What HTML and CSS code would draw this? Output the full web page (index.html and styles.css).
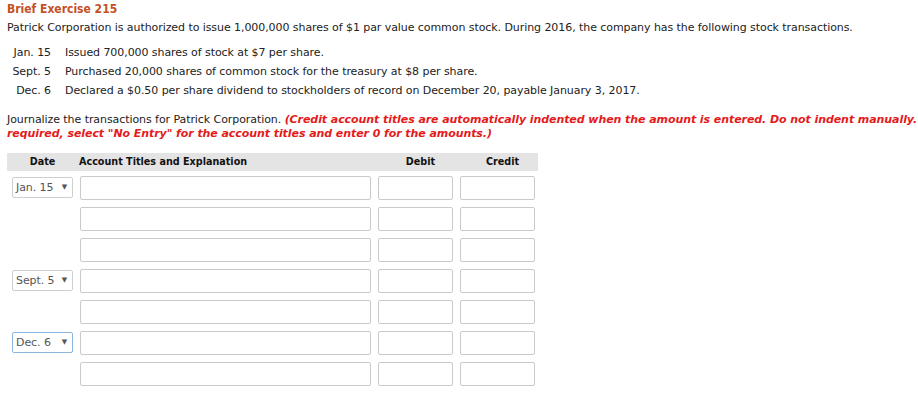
FILE: index.html
```html
<!DOCTYPE html>
<html>
<head>
<meta charset="utf-8">
<link rel="stylesheet" href="styles.css">
</head>
<body>
<div class="page">
  <h1 class="title">Brief Exercise 215</h1>
  <p class="intro">Patrick Corporation is authorized to issue 1,000,000 shares of $1 par value common stock. During 2016, the company has the following stock transactions.</p>
  <div class="trans">
    <div class="tdate">Jan. 15</div><div class="tdesc">Issued 700,000 shares of stock at $7 per share.</div>
    <div class="tdate">Sept. 5</div><div class="tdesc">Purchased 20,000 shares of common stock for the treasury at $8 per share.</div>
    <div class="tdate">Dec. 6</div><div class="tdesc">Declared a $0.50 per share dividend to stockholders of record on December 20, payable January 3, 2017.</div>
  </div>
  <p class="instr">Journalize the transactions for Patrick Corporation. <em class="warn">(Credit account titles are automatically indented when the amount is entered. Do not indent manually. If no entry is<br>required, select "No Entry" for the account titles and enter 0 for the amounts.)</em></p>
  <div class="journal">
    <div class="jhead">
      <div class="h-date">Date</div>
      <div class="h-acct">Account Titles and Explanation</div>
      <div class="h-num">Debit</div>
      <div class="h-num">Credit</div>
    </div>
    <div class="jrow"><div class="sel">Jan. 15<span class="arr">▼</span></div><div class="box"></div><div class="box"></div><div class="box"></div></div>
    <div class="jrow"><div></div><div class="box"></div><div class="box"></div><div class="box"></div></div>
    <div class="jrow"><div></div><div class="box"></div><div class="box"></div><div class="box"></div></div>
    <div class="jrow"><div class="sel">Sept. 5<span class="arr">▼</span></div><div class="box"></div><div class="box"></div><div class="box"></div></div>
    <div class="jrow"><div></div><div class="box"></div><div class="box"></div><div class="box"></div></div>
    <div class="jrow"><div class="sel focus">Dec. 6<span class="arr">▼</span></div><div class="box"></div><div class="box"></div><div class="box"></div></div>
    <div class="jrow"><div></div><div class="box"></div><div class="box"></div><div class="box"></div></div>
  </div>
</div>
</body>
</html>
```

FILE: styles.css
```css
html, body {
  margin: 0;
  padding: 0;
  background: #fff;
  overflow: hidden;
}
.page {
  padding: 2px 0 0 7px;
  font-family: "DejaVu Sans", sans-serif;
  font-size: 11px;
  letter-spacing: -0.07px;
  color: #222;
  width: 1200px;
}
.title {
  margin: 0;
  font-family: "DejaVu Sans Condensed", "DejaVu Sans", sans-serif;
  font-size: 12px;
  font-weight: bold;
  letter-spacing: 0;
  color: #c4511f;
  line-height: 15px;
}
.intro {
  margin: 4px 0 0;
  line-height: 14px;
}
.trans {
  display: grid;
  grid-template-columns: 44px auto;
  column-gap: 14px;
  row-gap: 5px;
  margin: 11px 0 0 0;
  line-height: 14px;
}
.tdate {
  text-align: right;
}
.instr {
  margin: 15px 0 0;
  line-height: 14px;
}
.warn {
  color: #e41b1b;
  font-weight: bold;
  font-style: italic;
}
.journal {
  margin-top: 12px;
  width: 531px;
}
.jhead {
  display: grid;
  grid-template-columns: 66px 291px 75px 75px;
  column-gap: 7px;
  padding-left: 5px;
  background: #e4e4e4;
  height: 18px;
  line-height: 18px;
  font-family: "DejaVu Sans Condensed", "DejaVu Sans", sans-serif;
  font-size: 10.7px;
  letter-spacing: 0;
  font-weight: bold;
  color: #111;
}
.h-date { text-align: center; padding-right: 5px; }
.h-acct { margin-left: -6px; }
.h-num { text-align: center; }
.jrow {
  display: grid;
  grid-template-columns: 61px 291px 75px 75px;
  column-gap: 7px;
  padding-left: 5px;
  margin-top: 7px;
  height: 24px;
}
.jhead + .jrow { margin-top: 5px; }
.box {
  border: 1px solid #cacaca;
  border-radius: 2px;
  box-sizing: border-box;
  height: 24px;
  background: #fff;
}
.sel {
  box-sizing: border-box;
  height: 21px;
  margin-top: 1px;
  border: 1px solid #cfcfcf;
  border-radius: 2px;
  color: #555;
  font-size: 11px;
  line-height: 19px;
  padding-left: 3px;
  position: relative;
}
.sel.focus { border-color: #8cb6dc; }
.arr {
  position: absolute;
  right: 5px;
  top: 0;
  font-size: 7px;
  color: #555;
}
```
